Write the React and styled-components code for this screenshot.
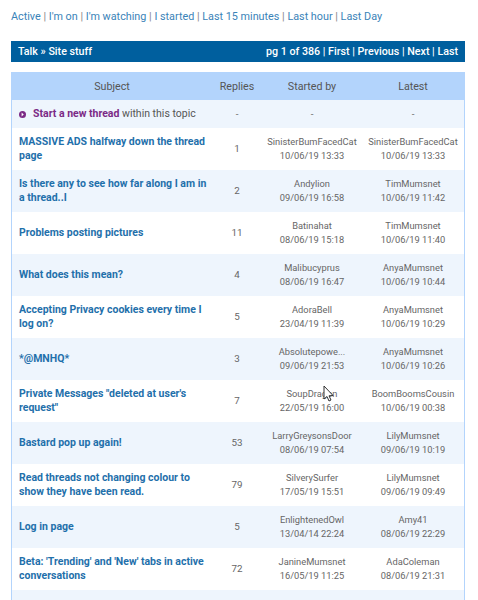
import React from "react";
import styled, { createGlobalStyle } from "styled-components";

const Global = createGlobalStyle`
html, body {
  margin: 0;
  padding: 0;
  height: 600px;
  overflow: hidden;
  background: #fff;
  font-family: Roboto, "Liberation Sans", sans-serif;
  font-size: 10.7px;
}
`

const Page = styled.div`
  position: relative;
  width: 478px;
  height: 600px;
  overflow: hidden;
  padding: 9px 13px 0 11px;
  box-sizing: border-box;
`

const Nav = styled.div`
  display: flex;
  height: 15px;
  line-height: 15px;
  font-size: 10.8px;
  color: #888;
  white-space: pre;
  a { color: #3a83b8; text-decoration: none; }
`

const Bar = styled.div`
  display: flex;
  justify-content: space-between;
  align-items: center;
  margin-top: 17px;
  height: 21px;
  padding: 0 7px;
  background: #005f9e;
  color: #fff;
  font-weight: 500;
  white-space: pre;
`

const Table = styled.div`
  margin-top: 10px;
  border: 1px solid #b3d4fc;
  border-bottom: 0;
`

const Row = styled.div`
  display: grid;
  grid-template-columns: 200px 50px 100px 1fr;
  align-items: center;
  height: ${(p) => p.$h || 42}px;
  background: ${(p) => p.$bg};
  color: #555;
  text-align: center;
  line-height: 14px;
`

const Subject = styled.a`
  padding-left: 7px;
  padding-right: 4px;
  text-align: left;
  color: #1f70ab;
  font-weight: 700;
  font-size: 10.5px;
  line-height: 14px;
`

const Count = styled.div`
  font-size: 9.8px;
  color: #666;
`

const Who = styled.div`
  font-size: 9.3px;
  white-space: nowrap;
  color: #666;
`

const NewThread = styled.div`
  display: flex;
  align-items: center;
  padding-left: 7px;
  white-space: pre;
  font-size: 10.5px;
  b { color: #7b2a86; font-weight: 700; }
  svg { margin-right: 7px; flex-shrink: 0; }
`

const Cursor = styled.svg`
  position: absolute;
  left: 323px;
  top: 385px;
`

const threads = [
  ["MASSIVE ADS halfway down the thread page", "1", "SinisterBumFacedCat", "10/06/19 13:33", "SinisterBumFacedCat", "10/06/19 13:33"],
  ["Is there any to see how far along I am in a thread..I", "2", "Andylion", "09/06/19 16:58", "TimMumsnet", "10/06/19 11:42"],
  ["Problems posting pictures", "11", "Batinahat", "08/06/19 15:18", "TimMumsnet", "10/06/19 11:40"],
  ["What does this mean?", "4", "Malibucyprus", "08/06/19 16:47", "AnyaMumsnet", "10/06/19 10:44"],
  ["Accepting Privacy cookies every time I log on?", "5", "AdoraBell", "23/04/19 11:39", "AnyaMumsnet", "10/06/19 10:29"],
  ["*@MNHQ*", "3", "Absolutepowe...", "09/06/19 21:53", "AnyaMumsnet", "10/06/19 10:26"],
  ["Private Messages \"deleted at user's request\"", "7", "SoupDragon", "22/05/19 16:00", "BoomBoomsCousin", "10/06/19 00:38"],
  ["Bastard pop up again!", "53", "LarryGreysonsDoor", "08/06/19 07:54", "LilyMumsnet", "09/06/19 10:19"],
  ["Read threads not changing colour to show they have been read.", "79", "SilverySurfer", "17/05/19 15:51", "LilyMumsnet", "09/06/19 09:49"],
  ["Log in page", "5", "EnlightenedOwl", "13/04/14 22:24", "Amy41", "08/06/19 22:29"],
  ["Beta: 'Trending' and 'New' tabs in active conversations", "72", "JanineMumsnet", "16/05/19 11:25", "AdaColeman", "08/06/19 21:31"],
  ["", "", "SunnyWithTheTime", "", "HelgaMumsnet", ""],
]

const navLinks = ["Active", "I'm on", "I'm watching", "I started", "Last 15 minutes", "Last hour", "Last Day"]

export default function App() {
  return (
    <Page>
      <Global />
      <Nav>
        {navLinks.map((l, i) => (
          <span key={l}>{i > 0 && " | "}<a>{l}</a></span>
        ))}
      </Nav>
      <Bar>
        <span>Talk » Site stuff</span>
        <span>pg 1 of 386 | First | Previous | Next | Last</span>
      </Bar>
      <Table>
        <Row $h={27} $bg="#b3d4fc">
          <div>Subject</div>
          <div>Replies</div>
          <div>Started by</div>
          <div>Latest</div>
        </Row>
        <Row $h={28} $bg="#eef5fd">
          <NewThread>
            <svg width="7" height="7" viewBox="0 0 8 8">
              <circle cx="4" cy="4" r="4" fill="#7b2a86" />
              <path d="M3 1.8 L5.4 4 L3 6.2 Z" fill="#fff" />
            </svg>
            <span><b>Start a new thread</b> within this topic</span>
          </NewThread>
          <Count>-</Count>
          <Count>-</Count>
          <Count>-</Count>
        </Row>
        {threads.map((t, i) => (
          <Row key={i} $bg={i % 2 === 0 ? "#fff" : "#eef5fd"}>
            <Subject>{t[0]}</Subject>
            <Count>{t[1]}</Count>
            <Who>{t[2]}<br />{t[3]}</Who>
            <Who>{t[4]}<br />{t[5]}</Who>
          </Row>
        ))}
      </Table>
      <Cursor width="13" height="18" viewBox="0 0 13 18">
        <path d="M1 1 L1 14 L4 11.5 L6 16 L8 15 L6 10.8 L10 10.5 Z" fill="#fff" stroke="#333" strokeWidth="1" />
      </Cursor>
    </Page>
  )
}
